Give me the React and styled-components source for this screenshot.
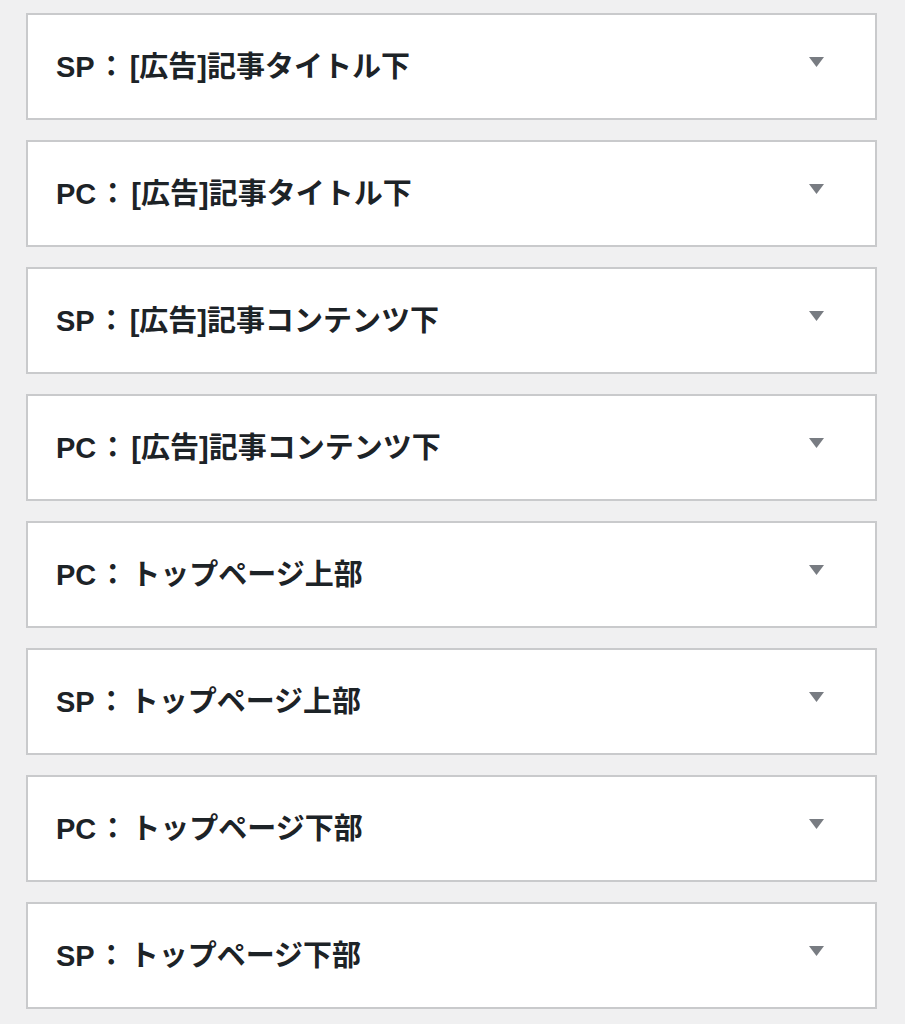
import React from "react";
import styled, { createGlobalStyle } from "styled-components";

const GlobalStyle = createGlobalStyle`
  html, body {
    margin: 0;
    padding: 0;
    background: #f0f0f1;
  }
`;

const List = styled.div`
  display: flex;
  flex-direction: column;
  gap: 20px;
  padding: 13px 28px 20px 26px;
`;

const Box = styled.div`
  box-sizing: border-box;
  height: 107px;
  background: #fff;
  border: 2px solid #c9cacc;
  display: flex;
  align-items: center;
  justify-content: space-between;
  padding: 0 51px 6px 28px;
`;

const Title = styled.h2`
  margin: 0;
  font-family: "Liberation Sans", "Noto Sans CJK JP", sans-serif;
  font-size: 29px;
  font-weight: 600;
  color: #1d2327;
  display: flex;
  align-items: baseline;
`;

const Sep = styled.span`
  margin: 0 4px 0 2px;
`;

const Toggle = styled.svg`
  width: 15px;
  height: 10px;
  margin-bottom: 4px;
  fill: #787c82;
`;

const items = [
  ["SP", "[広告]記事タイトル下"],
  ["PC", "[広告]記事タイトル下"],
  ["SP", "[広告]記事コンテンツ下"],
  ["PC", "[広告]記事コンテンツ下"],
  ["PC", "トップページ上部"],
  ["SP", "トップページ上部"],
  ["PC", "トップページ下部"],
  ["SP", "トップページ下部"],
];

const App = () => {
  return (
    <>
      <GlobalStyle />
      <List>
        {items.map(([device, place]) => (
          <Box key={device + place}>
            <Title>
              {device}
              <Sep>：</Sep>
              {place}
            </Title>
            <Toggle viewBox="0 0 15 10">
              <polygon points="0,0 15,0 7.5,10" />
            </Toggle>
          </Box>
        ))}
      </List>
    </>
  );
};

export default App;
